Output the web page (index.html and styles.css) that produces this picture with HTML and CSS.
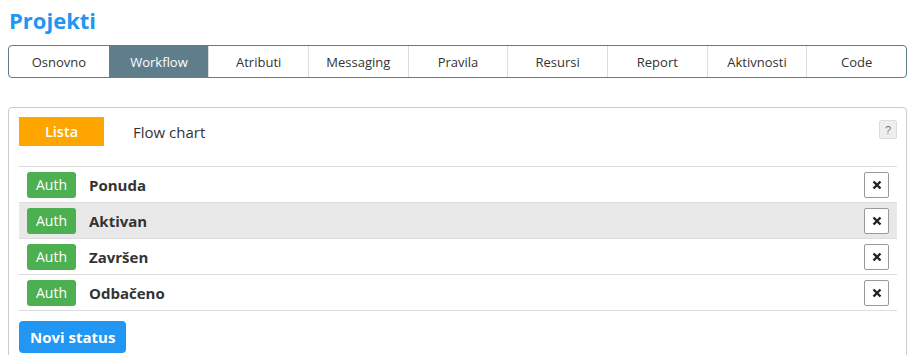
FILE: index.html
```html
<!DOCTYPE html>
<html lang="hr">
<head>
  <meta charset="UTF-8">
  <title>Projekti</title>
  <link rel="stylesheet" href="styles.css">
</head>
<body>
  <h1 class="page-title">Projekti</h1>

  <nav class="tabs">
    <a class="tab">Osnovno</a>
    <a class="tab active">Workflow</a>
    <a class="tab">Atributi</a>
    <a class="tab">Messaging</a>
    <a class="tab">Pravila</a>
    <a class="tab">Resursi</a>
    <a class="tab">Report</a>
    <a class="tab">Aktivnosti</a>
    <a class="tab">Code</a>
  </nav>

  <div class="panel">
    <div class="panel-head">
      <button class="view-btn active">Lista</button>
      <button class="view-btn">Flow chart</button>
      <button class="help-btn">?</button>
    </div>

    <div class="status-list">
      <div class="status-row">
        <span class="auth">Auth</span>
        <span class="status-name">Ponuda</span>
        <button class="remove"><svg viewBox="0 0 10 10"><path d="M1.5 1.5l7 7M8.5 1.5l-7 7"/></svg></button>
      </div>
      <div class="status-row selected">
        <span class="auth">Auth</span>
        <span class="status-name">Aktivan</span>
        <button class="remove"><svg viewBox="0 0 10 10"><path d="M1.5 1.5l7 7M8.5 1.5l-7 7"/></svg></button>
      </div>
      <div class="status-row">
        <span class="auth">Auth</span>
        <span class="status-name">Završen</span>
        <button class="remove"><svg viewBox="0 0 10 10"><path d="M1.5 1.5l7 7M8.5 1.5l-7 7"/></svg></button>
      </div>
      <div class="status-row">
        <span class="auth">Auth</span>
        <span class="status-name">Odbačeno</span>
        <button class="remove"><svg viewBox="0 0 10 10"><path d="M1.5 1.5l7 7M8.5 1.5l-7 7"/></svg></button>
      </div>
    </div>

    <button class="new-status">Novi status</button>
  </div>
</body>
</html>
```

FILE: styles.css
```css
body {
  margin: 0;
  padding: 8px;
  font-family: "Open Sans", "Noto Sans", sans-serif;
  color: #333;
}
.page-title {
  margin: 0 0 8px 1px;
  height: 29px;
  line-height: 24px;
  font-size: 22px;
  font-weight: 700;
  color: #2196f3;
}
.tabs {
  display: grid;
  grid-template-columns: repeat(9, 1fr);
  height: 33px;
  border: 1px solid #607d8b;
  border-radius: 4px;
  overflow: hidden;
  box-sizing: border-box;
}
.tab {
  display: flex;
  align-items: center;
  justify-content: center;
  font-size: 13px;
  color: #333;
  border-left: 1px solid #ddd;
}
.tab:first-child {
  border-left: none;
}
.tab.active {
  background: #607d8b;
  color: #fff;
  border-left-color: #607d8b;
}
.panel {
  margin-top: 29px;
  border: 1px solid #ccc;
  border-radius: 4px;
  padding: 9px 9px 0 10px;
  height: 260px;
}
.panel-head {
  display: flex;
  align-items: flex-start;
}
.view-btn {
  height: 29px;
  border: none;
  background: none;
  font-family: inherit;
  font-size: 15px;
  color: #333;
  padding: 0 0 0 29px;
}
.view-btn.active {
  width: 85px;
  padding: 0;
  background: #ffa500;
  color: #fff;
  font-size: 14.5px;
  font-weight: 600;
}
.help-btn {
  margin-left: auto;
  margin-top: 3px;
  width: 18px;
  height: 19px;
  padding: 0;
  font-size: 11px;
  color: #777;
  background: #eee;
  border: 1px solid #ddd;
  border-radius: 2px;
}
.status-list {
  margin-top: 20px;
  border-top: 1px solid #ddd;
}
.status-row {
  display: flex;
  align-items: center;
  height: 35px;
  padding: 0 8px;
  border-bottom: 1px solid #ddd;
}
.status-row.selected {
  background: #e8e8e8;
}
.auth {
  width: 49px;
  height: 26px;
  line-height: 26px;
  text-align: center;
  background: #4caf50;
  color: #fff;
  font-size: 14px;
  border-radius: 3px;
}
.status-name {
  margin-left: 13px;
  font-size: 15px;
  font-weight: 700;
  color: #333;
}
.remove {
  margin-left: auto;
  display: flex;
  align-items: center;
  justify-content: center;
  width: 25px;
  height: 26px;
  padding: 0;
  background: #fff;
  border: 1px solid #999;
  border-radius: 2px;
}
.remove svg {
  width: 10px;
  height: 10px;
  stroke: #222;
  stroke-width: 2.4;
  fill: none;
}
.new-status {
  margin-top: 10px;
  height: 32px;
  padding: 0 11px;
  background: #2196f3;
  color: #fff;
  border: none;
  border-radius: 4px;
  font-family: inherit;
  font-size: 15px;
  font-weight: 700;
}
```
